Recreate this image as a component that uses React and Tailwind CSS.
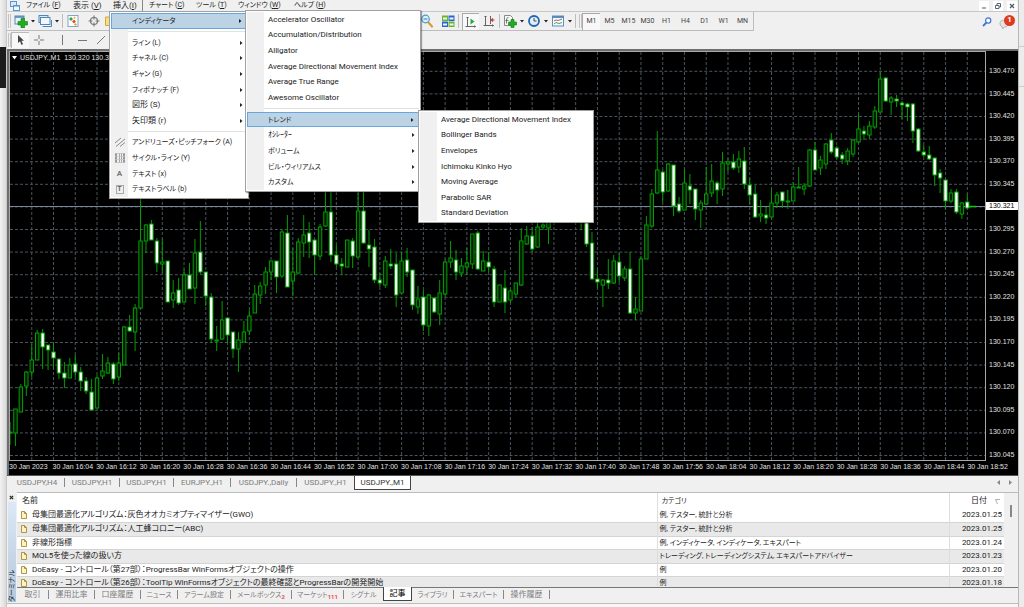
const UI = "font-['Roboto','Noto_Sans_CJK_JP',sans-serif] [font-feature-settings:'palt']";

const menuBar = [
  { label: "ファイル", key: "F", w: "w-[47px]" },
  { label: "表示", key: "V", w: "w-[36px]" },
  { label: "挿入", key: "I", w: "w-[40px]", open: true },
  { label: "チャート", key: "C", w: "w-[47px]" },
  { label: "ツール", key: "T", w: "w-[42px]" },
  { label: "ウィンドウ", key: "W", w: "w-[56px]" },
  { label: "ヘルプ", key: "H", w: "w-[40px]" },
];

const insertShapes = ["ライン (L)", "チャネル (C)", "ギャン (G)", "フィボナッチ (F)", "図形 (S)", "矢印類 (r)"];
const insertTools = [
  { label: "アンドリューズ・ピッチフォーク (A)", icon: <PitchforkIcon /> },
  { label: "サイクル・ライン (Y)", icon: <CycleIcon /> },
  { label: "テキスト (x)", icon: <TextIcon /> },
  { label: "テキストラベル (b)", icon: <LabelIcon /> },
];
const indicators = [
  "Accelerator Oscillator",
  "Accumulation/Distribution",
  "Alligator",
  "Average Directional Movement Index",
  "Average True Range",
  "Awesome Oscillator",
];
const groups = ["トレンド", "ｵｼﾚｰﾀｰ", "ボリューム", "ビル・ウィリアムス", "カスタム"];
const trends = [
  "Average Directional Movement Index",
  "Bollinger Bands",
  "Envelopes",
  "Ichimoku Kinko Hyo",
  "Moving Average",
  "Parabolic SAR",
  "Standard Deviation",
];

const periods = ["M1", "M5", "M15", "M30", "H1", "H4", "D1", "W1", "MN"];

const chartTabs = [
  { label: "USDJPY,H4", w: "w-[55px]" },
  { label: "USDJPY,H1", w: "w-[55px]" },
  { label: "USDJPY,H1", w: "w-[54px]" },
  { label: "EURJPY.,H1", w: "w-[57px]" },
  { label: "USDJPY.,Daily", w: "w-[66px]" },
  { label: "USDJPY.,H1", w: "w-[57px]", last: true },
  { label: "USDJPY.,M1", w: "w-[57px]", active: true },
];

const articles = [
  ["母集団最適化アルゴリズム：灰色オオカミオプティマイザー(GWO)", "例, テスター, 統計と分析", "2023.01.25"],
  ["母集団最適化アルゴリズム：人工蜂コロニー(ABC)", "例, テスター, 統計と分析", "2023.01.25"],
  ["非線形指標", "例, インディケータ, インディケータ, エキスパート", "2023.01.24"],
  ["MQL5を使った線の扱い方", "トレーディング, トレーディングシステム, エキスパートアドバイザー", "2023.01.23"],
  ["DoEasy - コントロール（第27部）：ProgressBar WinFormsオブジェクトの操作", "例", "2023.01.20"],
  ["DoEasy - コントロール（第26部）：ToolTip WinFormsオブジェクトの最終確認とProgressBarの開発開始", "例", "2023.01.18"],
];

const terminalTabs = [
  { label: "取引", w: "w-[32px]" },
  { label: "運用比率", w: "w-[46px]" },
  { label: "口座履歴", w: "w-[46px]" },
  { label: "ニュース", w: "w-[37px]" },
  { label: "アラーム設定", w: "w-[53px]" },
  { label: "メールボックス", w: "w-[61px]", count: 2 },
  { label: "マーケット", w: "w-[52px]", count: 111 },
  { label: "シグナル", w: "w-[39px]", last: true },
  { label: "記事", w: "w-[29px]", active: true },
  { label: "ライブラリ", w: "w-[42px]" },
  { label: "エキスパート", w: "w-[50px]" },
  { label: "操作履歴", w: "w-[46px]" },
];

// katakana labels are set one size smaller than kanji
const labelSize = (s) => (/^[ァ-ー]{3}/.test(s) ? "text-[7px]" : "text-[8px]");

// [high, body top, body bottom, low, bullish], one per minute
const candles = [
  [422, 432, 433, 445, 1], [409, 409, 433, 446, 1], [384, 387, 412, 412, 1], [371, 372, 386, 396, 1],
  [344, 360, 372, 377, 1], [330, 333, 360, 360, 1], [329, 333, 347, 369, 0], [345, 345, 350, 370, 0],
  [343, 352, 358, 368, 0], [359, 359, 373, 379, 0], [362, 373, 378, 388, 0], [358, 365, 378, 378, 1],
  [355, 364, 372, 377, 0], [367, 372, 381, 391, 0], [377, 381, 391, 394, 0], [379, 392, 410, 410, 0],
  [375, 378, 408, 408, 1], [354, 371, 376, 379, 1], [357, 363, 373, 374, 1], [362, 364, 379, 384, 0],
  [353, 363, 377, 381, 1], [326, 327, 365, 365, 1], [315, 327, 331, 332, 0], [304, 308, 332, 351, 1],
  [190, 241, 308, 308, 1], [224, 225, 241, 253, 1], [220, 224, 240, 240, 0], [238, 241, 263, 272, 0],
  [239, 262, 264, 273, 1], [261, 261, 302, 302, 0], [280, 293, 300, 308, 1], [278, 290, 303, 305, 0],
  [269, 275, 302, 302, 1], [263, 275, 289, 289, 0], [239, 253, 288, 304, 1], [221, 252, 272, 274, 0],
  [272, 272, 296, 306, 0], [293, 297, 339, 343, 0], [326, 340, 341, 351, 1], [301, 320, 339, 340, 1],
  [318, 318, 335, 343, 0], [332, 332, 349, 358, 0], [332, 340, 349, 372, 1], [321, 332, 342, 342, 1],
  [310, 316, 331, 335, 1], [285, 294, 313, 313, 1], [282, 286, 295, 304, 1], [267, 272, 285, 294, 1],
  [261, 261, 272, 280, 1], [261, 261, 277, 293, 0], [230, 232, 276, 278, 1], [215, 233, 287, 287, 0],
  [248, 272, 281, 296, 1], [238, 242, 273, 274, 1], [215, 235, 243, 257, 1], [222, 233, 242, 258, 0],
  [240, 240, 255, 275, 0], [224, 227, 256, 260, 1], [180, 212, 226, 227, 1], [180, 212, 255, 262, 0],
  [245, 255, 264, 267, 0], [258, 264, 266, 275, 0], [240, 240, 267, 267, 1], [238, 241, 256, 268, 0],
  [180, 211, 257, 258, 1], [180, 211, 243, 244, 0], [230, 245, 249, 267, 0], [239, 247, 280, 283, 0],
  [273, 280, 283, 287, 0], [256, 261, 285, 288, 1], [249, 264, 266, 269, 0], [253, 264, 295, 307, 0],
  [252, 261, 293, 293, 1], [248, 260, 272, 277, 0], [270, 270, 305, 310, 0], [286, 299, 307, 314, 1],
  [290, 297, 325, 331, 0], [294, 295, 326, 336, 1], [297, 298, 312, 313, 0], [280, 293, 314, 325, 1],
  [259, 262, 294, 297, 1], [241, 258, 262, 268, 1], [250, 260, 272, 280, 0], [258, 266, 273, 277, 1],
  [248, 263, 267, 275, 1], [234, 234, 264, 269, 1], [231, 233, 269, 270, 0], [251, 261, 271, 271, 1],
  [252, 262, 267, 272, 0], [266, 269, 302, 307, 0], [285, 285, 302, 302, 1], [270, 288, 302, 313, 0],
  [289, 291, 300, 303, 1], [283, 283, 294, 297, 1], [228, 241, 285, 286, 1], [226, 236, 244, 245, 1],
  [227, 236, 249, 252, 0], [220, 227, 247, 248, 1], [215, 225, 227, 230, 1], [210, 222, 228, 244, 1],
  [195, 204, 220, 222, 1], [190, 198, 210, 218, 1], [188, 198, 208, 214, 0], [186, 194, 208, 216, 1],
  [188, 194, 210, 220, 0], [200, 210, 221, 230, 0], [214, 220, 244, 247, 0], [232, 243, 279, 280, 0],
  [269, 279, 282, 288, 0], [279, 280, 285, 307, 1], [259, 280, 283, 289, 0], [255, 261, 283, 284, 1],
  [253, 262, 276, 282, 0], [266, 269, 278, 281, 1], [252, 269, 313, 314, 0], [297, 309, 313, 320, 1],
  [256, 259, 311, 311, 1], [216, 225, 259, 259, 1], [189, 194, 226, 228, 1], [131, 170, 193, 194, 1],
  [170, 172, 192, 202, 0], [163, 164, 191, 192, 1], [165, 165, 206, 216, 0], [197, 204, 211, 213, 0],
  [169, 183, 210, 210, 1], [174, 186, 190, 204, 0], [189, 189, 209, 220, 0], [200, 203, 210, 228, 1],
  [167, 194, 204, 205, 1], [164, 181, 193, 197, 1], [181, 183, 190, 204, 0], [152, 163, 189, 196, 1],
  [158, 162, 164, 172, 1], [154, 162, 168, 170, 0], [151, 159, 167, 173, 1], [147, 161, 184, 189, 0],
  [178, 185, 195, 204, 0], [185, 194, 217, 218, 0], [200, 214, 216, 222, 1], [207, 215, 218, 224, 0],
  [189, 203, 217, 218, 1], [192, 195, 203, 208, 1], [192, 192, 201, 208, 0], [190, 201, 202, 209, 1],
  [182, 187, 201, 201, 1], [167, 187, 188, 188, 1], [183, 186, 189, 195, 1], [149, 150, 186, 187, 1],
  [142, 150, 170, 170, 0], [156, 160, 168, 175, 1], [143, 144, 164, 169, 1], [133, 140, 152, 154, 0],
  [146, 148, 157, 159, 0], [152, 155, 159, 164, 0], [148, 151, 161, 165, 1], [139, 140, 154, 157, 1],
  [114, 129, 142, 143, 1], [126, 131, 134, 140, 0], [121, 126, 135, 139, 1], [106, 111, 127, 129, 1],
  [71, 79, 112, 112, 1], [77, 78, 101, 102, 0], [96, 98, 102, 115, 1], [95, 99, 101, 107, 0],
  [101, 103, 105, 119, 0], [103, 104, 107, 121, 0], [103, 104, 131, 143, 0], [128, 129, 151, 152, 0],
  [145, 152, 155, 157, 0], [146, 155, 159, 160, 0], [157, 158, 175, 186, 0], [169, 173, 178, 193, 0],
  [179, 180, 201, 209, 0], [189, 193, 201, 203, 1], [189, 192, 212, 214, 0], [202, 203, 214, 219, 1],
  [194, 202, 208, 209, 0],
];

const PLOT_W = 976;
const PLOT_H = 408;
const Y0 = 52;
const STEP = 49 / 9;

const prices = Array.from({ length: 18 }, (_, i) => (130.47 - i * 0.025).toFixed(3));
const times = Array.from({ length: 23 }, (_, i) => {
  if (i === 0) return "30 Jan 2023";
  const m = 16 * 60 + 4 + (i - 1) * 8;
  return `30 Jan ${Math.floor(m / 60)}:${String(m % 60).padStart(2, "0")}`;
});

function PitchforkIcon() {
  return (
    <svg viewBox="0 0 10 10" className="size-[10px]" stroke="#8a8a8a" fill="none">
      <path d="M0 6 6 1M1 9.500 10 2M5 9.500l5-4" />
    </svg>
  );
}

function CycleIcon() {
  return (
    <svg viewBox="0 0 10 10" className="size-[10px]" fill="none">
      <path d="M1 0v10M9 0v10" stroke="#999" strokeWidth="2" />
      <path d="M4.500 0v10M6.500 0v10" stroke="#a5a5a5" />
      <path d="M0 .5h10M0 3.500h10M0 6.500h10M0 9.500h10" stroke="#c4c4c4" strokeWidth=".7" />
    </svg>
  );
}

function TextIcon() {
  return <span className="text-[8px] font-bold text-[#777]">A</span>;
}

function LabelIcon() {
  return <span className="flex h-[9px] w-[8px] items-center justify-center border border-[#aaa] text-[7px] font-bold text-[#666]">T</span>;
}

function Caret() {
  return (
    <svg viewBox="0 0 4 3" className="h-[3px] w-[4px] shrink-0">
      <path d="M0 0h4L2 2.500z" fill="#222" />
    </svg>
  );
}

function Separator() {
  return <span className="h-[14px] w-px shrink-0 bg-[#bdbdbd]" />;
}

function Grip() {
  return <span className="h-[14px] w-[3px] shrink-0 border-x border-[#c4c4c4]" />;
}

function NewChartIcon() {
  return (
    <svg viewBox="0 0 14 14" className="size-[14px] shrink-0">
      <rect x="1" y="2" width="9" height="8" fill="#e8f0f8" stroke="#5a87ad" />
      <path d="M1 3h9" stroke="#4b85b8" strokeWidth="1.500" />
      <path d="M7 4.500h3.500V7.500H13.500V11H10.500v3H7v-3H4V7.500H7z" fill="#1fae1f" stroke="#0f7a12" strokeWidth=".6" />
    </svg>
  );
}

function ProfilesIcon() {
  return (
    <svg viewBox="0 0 14 14" className="size-[14px] shrink-0" stroke="#4f88bb">
      <rect x="1" y="1.500" width="9" height="7" fill="#dbe9f5" />
      <rect x="4" y="5.500" width="8.500" height="6.500" fill="#f2f8fd" stroke="none" />
      <rect x="2.500" y="3.500" width="9.500" height="7" fill="#f2f8fd" />
      <path d="M4.500 12.500h9V6" fill="none" />
    </svg>
  );
}

function WatchIcon() {
  return (
    <svg viewBox="0 0 14 14" className="size-[14px] shrink-0">
      <rect x="2" y="1.500" width="10" height="11" fill="#fff" stroke="#7fa6c9" />
      <path d="m5 3 2 2-2 2-2-2z" fill="#2fa836" />
      <path d="m8 5.500 2 2-2 2-2-2z" fill="#e0542d" />
      <path d="m9.500 9 1.500 1.500L9.500 12 8 10.500z" fill="#e9a33a" />
      <path d="m8.500 2.500 1.200 1.200-1.200 1.200-1.200-1.200z" fill="#e6a95a" />
    </svg>
  );
}

function TargetIcon() {
  return (
    <svg viewBox="0 0 14 14" className="size-[14px] shrink-0" fill="none" stroke="#777">
      <circle cx="7" cy="7" r="3.500" strokeWidth="1.200" />
      <path d="M7 1.500v4M7 8.500v4M1.500 7h4M8.500 7h4" strokeWidth="1.200" />
    </svg>
  );
}

function FolderIcon() {
  return (
    <svg viewBox="0 0 14 14" className="size-[14px] shrink-0">
      <path d="M1.500 3h4l1 1.500h6v7h-11z" fill="#f7dd7c" stroke="#c79a2c" strokeWidth=".8" />
    </svg>
  );
}

function ZoomIcon() {
  return (
    <svg viewBox="0 0 14 14" className="size-[14px] shrink-0">
      <path d="m8 8 4 4.500" stroke="#d6a02c" strokeWidth="2.200" strokeLinecap="round" />
      <circle cx="5.500" cy="5" r="3.800" fill="#d7effc" stroke="#4e9ac9" strokeWidth="1.200" />
      <path d="M3.500 5h4" stroke="#3c7fae" />
    </svg>
  );
}

function TileIcon() {
  return (
    <svg viewBox="0 0 14 14" className="size-[14px] shrink-0">
      <rect x="1" y="1.500" width="6" height="5.500" fill="#6db52a" />
      <rect x="7.500" y="1.500" width="6" height="5.500" fill="#2c67c9" />
      <rect x="1" y="7.500" width="6" height="5.500" fill="#2c67c9" />
      <rect x="7.500" y="7.500" width="6" height="5.500" fill="#6db52a" />
      <path d="M2 4.500h4M8.500 4.500h4M2 10.500h4M8.500 10.500h4" stroke="#edf5ff" strokeWidth="1.800" />
    </svg>
  );
}

function ScrollIcon({ shift }) {
  return (
    <svg viewBox="0 0 14 14" className="size-[14px] shrink-0" fill="none" stroke="#555">
      <path d="M3.500 2v9.500M1.500 11.500h10M2.500 3l1-1 1 1M10.500 10.500l1 1-1 1" strokeWidth=".9" />
      {shift ? (
        <>
          <path d="M8.500 2v8" strokeWidth=".9" />
          <path d="M12.500 6H9M11 4.500 9.200 6 11 7.500" stroke="#c8402a" strokeWidth="1.100" />
        </>
      ) : (
        <path d="m6.500 3.500 4 3-4 3z" fill="#22b03a" stroke="none" />
      )}
    </svg>
  );
}

function IndicatorIcon() {
  return (
    <svg viewBox="0 0 14 14" className="size-[14px] shrink-0">
      <path d="M1.500 1.500h6l2 2v8h-8z" fill="#f8f8f8" stroke="#888" />
      <path d="M3.500 9.500V6c0-1.500.7-2.500 2-2.500M2.500 6.500h3" stroke="#555" fill="none" strokeWidth=".8" />
      <path d="M8 5.500h3V8h2.500v3H11v2.500H8V11H5.500V8H8z" fill="#1fae1f" stroke="#0f7a12" strokeWidth=".6" />
    </svg>
  );
}

function ClockIcon() {
  return (
    <svg viewBox="0 0 14 14" className="size-[14px] shrink-0">
      <circle cx="7" cy="7" r="5" fill="#dff0fc" stroke="#2065b0" strokeWidth="1.800" />
      <path d="M7 4v3h2.500" stroke="#333" fill="none" strokeWidth=".9" />
    </svg>
  );
}

function TemplateIcon() {
  return (
    <svg viewBox="0 0 14 14" className="size-[14px] shrink-0" fill="none">
      <rect x="1.500" y="2" width="11" height="10" fill="#f5faff" stroke="#5b8fbd" />
      <path d="M1.500 3h11" stroke="#4b85b8" strokeWidth="1.800" />
      <path d="m3 7 2-1 2 .5L11 5" stroke="#c0493a" strokeWidth=".9" />
      <path d="m3 10 2-1.500 3 1L11 8.500" stroke="#3b9a45" strokeWidth=".9" />
    </svg>
  );
}

function IconButton({ label, pressed, children }) {
  return (
    <button
      aria-label={label}
      className={
        pressed
          ? "flex h-[17px] w-[17px] shrink-0 items-center justify-center border-t border-l border-[#aaa] bg-[#f8f8f8]"
          : "flex h-[17px] shrink-0 items-center justify-center"
      }
    >
      {children}
    </button>
  );
}

function MenuBar() {
  return (
    <header className="flex h-[12px] shrink-0 items-center border-b border-[#c6c6c6] leading-[11px] text-[#222]">
      <svg viewBox="0 0 10 10" className="ml-[3px] size-[10px]" stroke="#5b97cf">
        <rect x=".5" y=".5" width="6" height="5" fill="#d9ebfa" />
        <rect x="3.500" y="4.500" width="6" height="5" fill="#f3f9ff" />
        <path d="M3.500 5h6" strokeWidth="1.200" />
      </svg>
      <nav className="ml-[6px] flex grow">
        {menuBar.map((m) => (
          <button
            key={m.key}
            className={`${m.w} ${labelSize(m.label)} flex h-[11px] shrink-0 items-center text-left whitespace-nowrap`}
          >
            <span className={m.open ? "h-[11px] w-[34px] border-r border-[#888] pl-[4px]" : ""}>
              {m.label}
              {m.open ? "(" : " ("}
              <u>{m.key}</u>)
            </span>
          </button>
        ))}
      </nav>
      <div className="mr-px flex gap-[4px] text-[#4d5866]">
        <button aria-label="最小化" className="flex size-[10px] items-center justify-center bg-white">
          <svg viewBox="0 0 6 6" className="size-[6px]"><path d="M1 5h4" stroke="currentColor" /></svg>
        </button>
        <button aria-label="元に戻す" className="flex size-[10px] items-center justify-center bg-white">
          <svg viewBox="0 0 6 6" className="size-[6px]" fill="none" stroke="currentColor">
            <path d="M2 2V.5h3.500V4H4M.5 2.500H4v3H.5z" strokeWidth=".9" />
          </svg>
        </button>
        <button aria-label="閉じる" className="flex size-[10px] items-center justify-center bg-white">
          <svg viewBox="0 0 6 6" className="size-[6px]"><path d="m1 1 4 4M5 1 1 5" stroke="currentColor" strokeWidth="1.200" /></svg>
        </button>
      </div>
    </header>
  );
}

function Toolbars() {
  return (
    <>
      <div className="flex h-[19px] shrink-0 items-center">
        <div className="flex h-[19px] items-center border-r border-b border-[#bdbdbd]">
          <div className="flex w-[413px] shrink-0 items-center gap-[3px] pl-px">
            <Grip />
            <IconButton label="新規チャート"><NewChartIcon /></IconButton>
            <Caret />
            <IconButton label="組表示"><ProfilesIcon /></IconButton>
            <Caret />
            <Separator />
            <IconButton label="気配値表示"><WatchIcon /></IconButton>
            <span className="w-px" />
            <IconButton label="データウィンドウ"><TargetIcon /></IconButton>
            <IconButton label="ナビゲータ"><FolderIcon /></IconButton>
          </div>
          <div className="flex items-center gap-[3px]">
            <IconButton label="縮小"><ZoomIcon /></IconButton>
            <span className="w-px" />
            <IconButton label="整列"><TileIcon /></IconButton>
            <Separator />
            <IconButton label="自動スクロール" pressed><ScrollIcon /></IconButton>
            <IconButton label="チャートシフト"><ScrollIcon shift /></IconButton>
            <Separator />
            <IconButton label="インディケータリスト"><IndicatorIcon /></IconButton>
            <Caret />
            <IconButton label="時間足設定"><ClockIcon /></IconButton>
            <Caret />
            <IconButton label="定型チャート"><TemplateIcon /></IconButton>
            <Caret />
            <Separator />
            <Grip />
          </div>
          <div className="flex pr-px text-[7px] text-[#444]">
            {periods.map((p, i) => (
              <button
                key={p}
                className={
                  i === 0
                    ? "h-[17px] w-[18px] border-t border-l border-[#aaa] bg-[#f8f8f8]"
                    : "h-[17px] w-[19px]"
                }
              >
                {p}
              </button>
            ))}
          </div>
        </div>
        <div className="ml-auto flex items-center gap-[7px] pr-[3px]">
          <button aria-label="検索">
            <svg viewBox="0 0 10 10" className="size-[10px]" fill="none" stroke="#3f74d1">
              <path d="m1 9 3.500-3.500" strokeWidth="1.800" />
              <circle cx="6.200" cy="3.500" r="2.600" fill="#fff" strokeWidth="1.200" />
            </svg>
          </button>
          <button aria-label="通知" className="relative h-[14px] w-[16px]">
            <svg viewBox="0 0 16 14" className="h-[14px] w-[16px]">
              <path d="M1 9a4 3.500 0 1 1 4 3.200L3.500 14 3.300 12A4 3.500 0 0 1 1 9z" fill="#e4e4e4" stroke="#aaa" strokeWidth=".8" />
            </svg>
            <span className="absolute top-0 right-0 flex size-[11px] items-center justify-center rounded-full bg-[#dd3a20] text-[8px] font-bold text-white">
              1
            </span>
          </button>
        </div>
      </div>
      <div className="flex h-[18px] shrink-0 items-center pl-px">
        <Grip />
        <button aria-label="カーソル" className="flex h-[16px] w-[18px] items-center justify-center border-t border-l border-[#bbb] bg-[#f8f8f8]">
          <svg viewBox="0 0 8 11" className="h-[11px] w-[8px]">
            <path d="M1 0v8l2-1.800L4.500 10l1.500-.7L4.500 5.800H7z" fill="#444" />
          </svg>
        </button>
        <button aria-label="十字カーソル" className="ml-[5px]">
          <svg viewBox="0 0 10 10" className="size-[10px]" stroke="#777">
            <path d="M5 0v4M5 6v4M0 5h4M6 5h4" />
          </svg>
        </button>
        <button aria-label="垂直線" className="ml-[18px] h-[10px] w-px bg-[#777]" />
        <button aria-label="水平線" className="ml-[15px] h-px w-[9px] bg-[#777]" />
        <button aria-label="トレンドライン" className="ml-[9px]">
          <svg viewBox="0 0 10 10" className="size-[10px]" stroke="#777">
            <path d="m1 9 8-8" />
          </svg>
        </button>
      </div>
    </>
  );
}

function Plot() {
  return (
    <svg viewBox={`0 0 ${PLOT_W} ${PLOT_H}`} preserveAspectRatio="none" className="absolute inset-0 size-full">
      <g stroke="#4a545e" strokeDasharray="3 2">
        {Array.from({ length: 44 }, (_, i) => (
          <path key={i} d={`M${(i + 1) * STEP * 4} 0V${PLOT_H}`} />
        ))}
        {prices.map((p, i) => (
          <path key={p} d={`M0 ${19.3 + i * 22.6}H${PLOT_W}`} />
        ))}
      </g>
      <path d={`M0 154.500H${PLOT_W}`} stroke="#77879a" />
      {candles.map(([high, top, bottom, low, up], i) => {
        const x = i * STEP;
        return (
          <g key={i} stroke="#009f00">
            <path d={`M${x} ${high - Y0}V${low - Y0}`} />
            <rect
              x={x - 1.7}
              y={top - Y0}
              width="3.400"
              height={Math.max(bottom - top, 1)}
              fill={up ? "#001a00" : "#ffffff"}
            />
          </g>
        );
      })}
      <path d="M960 154.500h7" stroke="#00d000" strokeWidth="1.500" />
    </svg>
  );
}

function Chart() {
  return (
    <section className="flex min-h-0 grow flex-col border-t-2 border-l-2 border-[#6e6e6e] bg-black font-['Liberation_Sans',Arial,sans-serif] text-[#e0e0e0]">
      <div className="flex min-h-0 grow">
        <div className="relative grow border border-[#a8a8a8]">
          <Plot />
          <p className="absolute top-px left-[2px] flex items-center gap-[3px] text-[7px] whitespace-pre">
            <svg viewBox="0 0 5 4" className="h-[4px] w-[5px]"><path d="M0 0h5L2.500 3.500z" fill="#fff" /></svg>
            USDJPY.,M1  130.320 130.322
          </p>
        </div>
        <ol className="flex w-[32px] flex-col justify-between pt-[16px] pb-[2px] text-[7px] leading-[8px]">
          {prices.map((p, i) => (
            <li key={p} className={i === 6 ? "bg-white pl-[3px] text-black" : "pl-[3px]"}>
              {i === 6 ? "130.321" : p}
            </li>
          ))}
        </ol>
      </div>
      <ol className="mr-[7px] flex h-[14px] shrink-0 pt-[2px] text-[7px] leading-[8px]">
        {times.map((t) => (
          <li key={t} className="w-0 grow whitespace-nowrap">{t}</li>
        ))}
      </ol>
    </section>
  );
}

function ChartTabs() {
  return (
    <div className="flex h-[17px] shrink-0 items-start border-t border-[#555] pl-[3px] text-[8px] text-[#7c7c7c]">
      {chartTabs.map((t, i) =>
        t.active ? (
          <button key={i} className={`${t.w} h-[14px] shrink-0 border-x border-b border-[#444] bg-white text-[#333]`}>
            {t.label}
          </button>
        ) : (
          <button key={i} className={`${t.w} flex h-[13px] shrink-0 items-center`}>
            <span className="grow">{t.label}</span>
            {!t.last && <span className="h-[9px] w-px bg-[#888]" />}
          </button>
        )
      )}
      <div className="mt-[4px] mr-[6px] ml-auto flex gap-[9px]">
        <svg viewBox="0 0 3 5" className="h-[5px] w-[3px]"><path d="M3 0v5L0 2.500z" fill="#888" /></svg>
        <svg viewBox="0 0 3 5" className="h-[5px] w-[3px]"><path d="M0 0v5l3-2.500z" fill="#888" /></svg>
      </div>
    </div>
  );
}

function Terminal() {
  return (
    <section className="flex h-[112px] shrink-0 border-b border-[#bcbcbc]">
      <div className="flex w-[9px] shrink-0 flex-col items-center">
        <button aria-label="閉じる" className="flex h-[10px] items-center">
          <svg viewBox="0 0 6 6" className="size-[5px]"><path d="m1 1 4 4M5 1 1 5" stroke="#222" strokeWidth="1.400" /></svg>
        </button>
        <span className="mb-px w-[8px] grow rotate-180 bg-linear-to-t from-[#dce8f5] to-[#b4c8dc] text-[7px] leading-[8px] text-[#222] [text-orientation:sideways] [writing-mode:vertical-rl]">
          ターミナル
        </span>
      </div>
      <div className="ml-px flex min-w-0 grow flex-col">
        <div className="flex h-[96px] shrink-0 overflow-hidden border-t border-b border-t-[#bbb] border-b-[#777] bg-white">
          <table className="w-full table-fixed self-start border-collapse text-[8px] leading-[12px] text-[#222]">
            <colgroup>
              <col />
              <col className="w-[292px]" />
              <col className="w-[55px]" />
            </colgroup>
            <thead>
              <tr className="h-[16px]">
                <th className="p-0 pl-[5px] text-left font-normal">名前</th>
                <th className="border-l border-[#ddd] p-0 pl-[4px] text-left text-[7px] font-normal">カテゴリ</th>
                <th className="border-l border-[#ddd] p-0 pr-[4px] text-right font-normal">
                  <span className="flex items-center justify-end gap-[8px]">
                    日付
                    <svg viewBox="0 0 5 5" className="size-[5px]" fill="none"><path d="M5 .5H.5L2.500 5" stroke="#999" strokeWidth=".8" /></svg>
                  </span>
                </th>
              </tr>
            </thead>
            <tbody>
              {articles.map(([name, category, date]) => (
                <tr key={name} className="border-b border-[#d4d4d4] odd:h-[13px] even:h-[14px] even:bg-[#e9e9e9]">
                  <td className="p-0 pl-[4px]">
                    <span className="flex items-center gap-[5px] overflow-hidden whitespace-nowrap">
                      <svg viewBox="0 0 6 8" className="h-[8px] w-[6px] shrink-0">
                        <path d="M.5.500h3l2 2v5h-5z" fill="#fdf3c4" stroke="#a68b32" strokeWidth=".9" />
                        <path d="M3.500.500v2h2" fill="none" stroke="#a68b32" strokeWidth=".9" />
                      </svg>
                      {name}
                    </span>
                  </td>
                  <td className="overflow-hidden border-l border-[#ddd] p-0 pl-[2px] text-[7px] whitespace-nowrap">{category}</td>
                  <td className="border-l border-[#ddd] p-0 pr-[2px] text-right">{date}</td>
                </tr>
              ))}
            </tbody>
          </table>
          <div className="flex w-[14px] shrink-0 justify-center bg-[#f0f0f0] pt-[12px]">
            <span className="h-[12px] w-[2px] bg-[#888]" />
          </div>
        </div>
        <div className="flex items-start leading-[12px] whitespace-nowrap text-[#7c7c7c]">
          {terminalTabs.map((t) =>
            t.active ? (
              <button key={t.label} className={`${t.w} -mt-px h-[14px] shrink-0 border-x border-b border-[#444] bg-white text-[8px] text-black`}>
                {t.label}
              </button>
            ) : (
              <button key={t.label} className={`${t.w} ${labelSize(t.label)} flex h-[13px] shrink-0 items-center`}>
                <span className="flex grow justify-center">
                  {t.label}
                  {t.count && <small className="mt-[4px] text-[6px] leading-[8px] font-bold text-[#f04848]">{t.count}</small>}
                </span>
                {!t.last && <span className="h-[9px] w-px bg-[#888]" />}
              </button>
            )
          )}
        </div>
      </div>
    </section>
  );
}

function MenuItem({ label, icon, arrow, active }) {
  return (
    <li className="flex min-h-0 grow basis-0">
      <button
        role="menuitem"
        className={`flex grow items-center whitespace-nowrap ${active ? "border border-[#66a7dd] bg-[#bcd3e6]" : ""}`}
      >
        <span className={`flex w-[17px] shrink-0 items-center justify-center self-stretch ${active ? "" : "bg-[#f0f0f0]"}`}>
          {icon}
        </span>
        <span className={`grow text-left ${labelSize(label)} ${active ? "pl-[3px]" : "pl-[4px]"}`}>{label}</span>
        {arrow && (
          <svg viewBox="0 0 3 4" className="mr-[4px] h-[4px] w-[3px]">
            <path d="M0 0v4l2.500-2z" fill="#222" />
          </svg>
        )}
      </button>
    </li>
  );
}

function MenuRule() {
  return (
    <li role="separator" className="flex h-[6px] shrink-0">
      <span className="w-[17px] bg-[#f0f0f0]" />
      <span className="mt-[2px] h-px grow bg-[#e2e2e2]" />
    </li>
  );
}

const MENU = "absolute flex flex-col border border-[#a0a0a0] bg-white p-px leading-[12px] text-[#222] shadow-[1px_1px_1px_rgba(0,0,0,0.35)]";

function Menus() {
  return (
    <>
      <ul role="menu" className={`${MENU} top-[11px] left-[109px] h-[188px] w-[140px]`}>
        <li className="flex h-[16px] shrink-0">
          <ul className="flex grow"><MenuItem label="インディケータ" arrow active /></ul>
        </li>
        <MenuRule />
        {insertShapes.map((s) => <MenuItem key={s} label={s} arrow />)}
        <MenuRule />
        {insertTools.map((t) => <MenuItem key={t.label} {...t} />)}
      </ul>
      <ul role="menu" className={`${MENU} top-[10px] left-[245px] h-[182px] w-[176px]`}>
        {indicators.map((s) => <MenuItem key={s} label={s} />)}
        <MenuRule />
        {groups.map((s, i) => (
          <MenuItem key={s} label={s} arrow active={i === 0} />
        ))}
      </ul>
      <ul role="menu" className={`${MENU} top-[110px] left-[418px] h-[113px] w-[176px]`}>
        {trends.map((s) => <MenuItem key={s} label={s} />)}
      </ul>
    </>
  );
}

export default function App() {
  return (
    <div className={`relative flex h-screen overflow-hidden bg-[#f0f0f0] ${UI}`}>
      <div className="flex w-[7px] shrink-0 flex-col border-r border-[#c8c8c8] bg-linear-to-r from-[#f2f2f2] to-[#dadada] pt-[47px]">
        <span className="h-[41px] bg-[#1c1c1c]" />
      </div>
      <main className="flex min-w-0 grow flex-col">
        <MenuBar />
        <Toolbars />
        <Chart />
        <ChartTabs />
        <Terminal />
        <div className="h-[3px] shrink-0 bg-[#f7f7f7]" />
      </main>
      <div className="w-[6px] shrink-0 border-l border-[#b8b8b8] bg-[#ececec] pt-[46px]">
        <div className="h-[41px] border-y border-[#ccc]" />
      </div>
      <Menus />
    </div>
  );
}
